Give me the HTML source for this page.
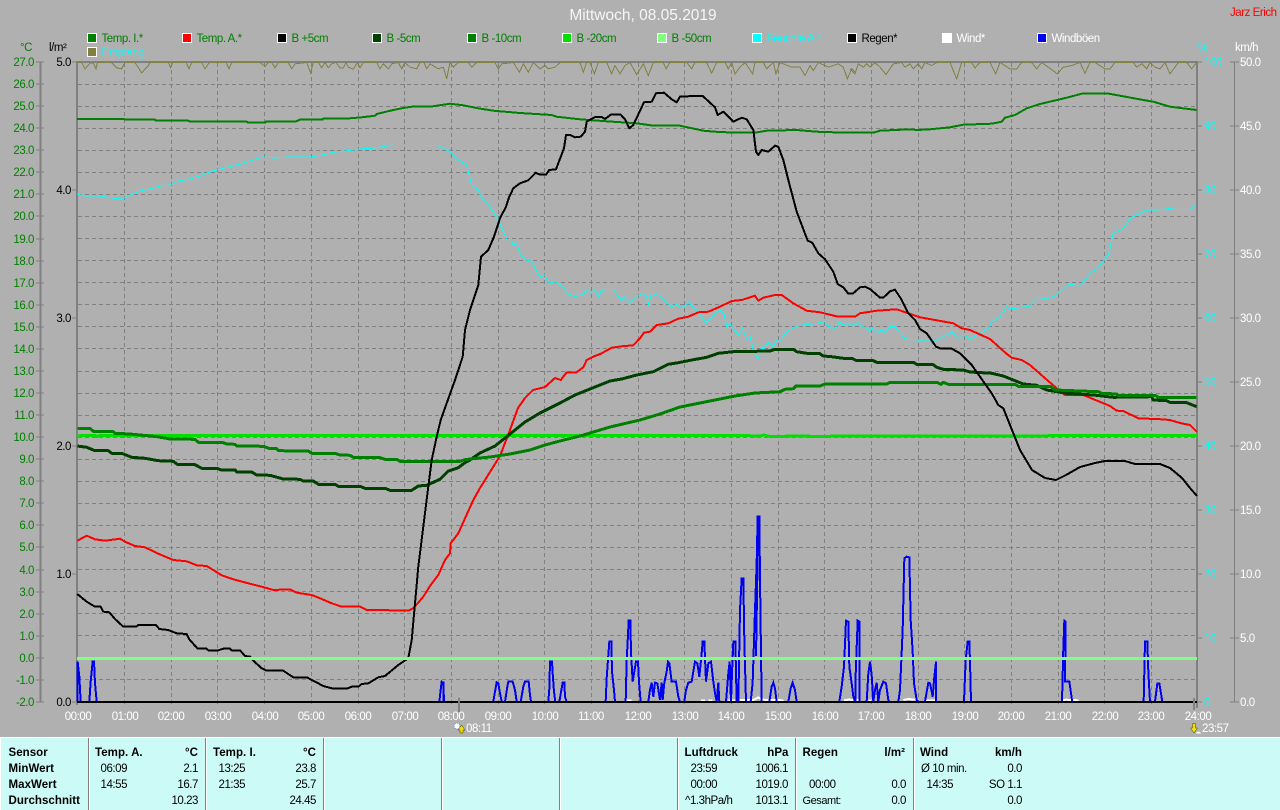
<!DOCTYPE html>
<html><head><meta charset="utf-8"><title>Mittwoch, 08.05.2019</title>
<style>
html,body{margin:0;padding:0;background:#b0b0b0;width:1280px;height:810px;overflow:hidden}
svg{display:block;font-family:"Liberation Sans",sans-serif;font-size:11.5px;letter-spacing:-.45px}
.l{fill:none;shape-rendering:crispEdges;stroke-linejoin:round}
.g{stroke:#808080;stroke-width:1;stroke-dasharray:4 3;shape-rendering:crispEdges;fill:none}
.s{stroke:#808080;stroke-width:1;shape-rendering:crispEdges;fill:none}
.b{font-weight:bold;font-size:11.5px;fill:#000;letter-spacing:.05px}
.t{fill:#000}
.e{text-anchor:end}
.m{text-anchor:middle;fill:#fff}
.blue polyline{fill:none;stroke:#0000f0;stroke-width:2;vector-effect:non-scaling-stroke;shape-rendering:crispEdges}
.cy polyline{fill:none;stroke:#00ffff;stroke-width:1;vector-effect:non-scaling-stroke;shape-rendering:crispEdges}
.ol polyline{fill:none;stroke:#808040;stroke-width:1;vector-effect:non-scaling-stroke;shape-rendering:crispEdges}
.wh polyline{fill:none;stroke:#fff;stroke-width:2;vector-effect:non-scaling-stroke;shape-rendering:crispEdges}
</style></head><body>
<svg width="1280" height="810" viewBox="0 0 1280 810" xmlns="http://www.w3.org/2000/svg">
<rect width="1280" height="810" fill="#b0b0b0"/>

<text x="643" y="20" text-anchor="middle" font-size="15.5" letter-spacing="0" fill="#f6f6f6">Mittwoch, 08.05.2019</text>
<text x="1230" y="16" fill="#ff0000">Jarz Erich</text>

<!-- legend -->
<g stroke="#fff" stroke-width="1" shape-rendering="crispEdges">
<rect x="87.5" y="33.5" width="9" height="9" fill="#008000"/>
<rect x="182.5" y="33.5" width="9" height="9" fill="#ff0000"/>
<rect x="277.5" y="33.5" width="9" height="9" fill="#000"/>
<rect x="372.5" y="33.5" width="9" height="9" fill="#004000"/>
<rect x="467.5" y="33.5" width="9" height="9" fill="#008000"/>
<rect x="562.5" y="33.5" width="9" height="9" fill="#00e000"/>
<rect x="657.5" y="33.5" width="9" height="9" fill="#80ff80"/>
<rect x="752.5" y="33.5" width="9" height="9" fill="#00ffff"/>
<rect x="847.5" y="33.5" width="9" height="9" fill="#000"/>
<rect x="942.5" y="33.5" width="9" height="9" fill="#fff"/>
<rect x="1037.5" y="33.5" width="9" height="9" fill="#0000f0"/>
<rect x="87.5" y="47.5" width="9" height="9" fill="#808040"/>
</g>
<g fill="#008000">
<text x="101.5" y="42">Temp. I.*</text>
<text x="196.5" y="42">Temp. A.*</text>
<text x="291.5" y="42">B +5cm</text>
<text x="386.5" y="42">B -5cm</text>
<text x="481.5" y="42">B -10cm</text>
<text x="576.5" y="42">B -20cm</text>
<text x="671.5" y="42">B -50cm</text>
</g>
<text x="766.5" y="42" fill="#00ffff">Feuchte A.*</text>
<text x="861.5" y="42" fill="#000">Regen*</text>
<text x="956.5" y="42" fill="#fff">Wind*</text>
<text x="1051.5" y="42" fill="#fff">Windböen</text>
<text x="101.5" y="56" fill="#00ffff">Empfang</text>

<text x="20" y="51" fill="#008000">°C</text>
<text x="49" y="51" fill="#000">l/m²</text>
<text x="1198" y="51" fill="#00ffff">%</text>
<text x="1235" y="51" fill="#fff">km/h</text>

<!-- left axes -->
<path class="s" d="M40.5 62V702" style="stroke-width:2"/>
<path class="s" d="M36 62H44M36 84H44M36 106H44M36 128H44M36 150H44M36 172H44M36 194H44M36 216H44M36 239H44M36 261H44M36 283H44M36 305H44M36 327H44M36 349H44M36 371H44M36 393H44M36 415H44M36 437H44M36 459H44M36 481H44M36 503H44M36 525H44M36 547H44M36 570H44M36 592H44M36 614H44M36 636H44M36 658H44M36 680H44M36 702H44"/>
<g fill="#008000" class="e" text-anchor="end">
<text x="34" y="66">27.0</text><text x="34" y="88">26.0</text><text x="34" y="110">25.0</text><text x="34" y="132">24.0</text><text x="34" y="154">23.0</text><text x="34" y="176">22.0</text><text x="34" y="198">21.0</text><text x="34" y="220">20.0</text><text x="34" y="243">19.0</text><text x="34" y="265">18.0</text><text x="34" y="287">17.0</text><text x="34" y="309">16.0</text><text x="34" y="331">15.0</text><text x="34" y="353">14.0</text><text x="34" y="375">13.0</text><text x="34" y="397">12.0</text><text x="34" y="419">11.0</text><text x="34" y="441">10.0</text><text x="34" y="463">9.0</text><text x="34" y="485">8.0</text><text x="34" y="507">7.0</text><text x="34" y="529">6.0</text><text x="34" y="551">5.0</text><text x="34" y="574">4.0</text><text x="34" y="596">3.0</text><text x="34" y="618">2.0</text><text x="34" y="640">1.0</text><text x="34" y="662">0.0</text><text x="34" y="684">-1.0</text><text x="34" y="706">-2.0</text>
</g>
<g fill="#000" text-anchor="end">
<text x="71" y="66">5.0</text><text x="71" y="194">4.0</text><text x="71" y="322">3.0</text><text x="71" y="450">2.0</text><text x="71" y="578">1.0</text><text x="71" y="706">0.0</text>
</g>
<path class="s" d="M72 62H77M72 190H77M72 318H77M72 446H77M72 574H77M72 702H77"/>

<!-- grid -->
<path class="g" d="M78 84.5H1196M78 106.5H1196M78 128.5H1196M78 150.5H1196M78 172.5H1196M78 194.5H1196M78 216.5H1196M78 238.5H1196M78 260.5H1196M78 282.5H1196M78 304.5H1196M78 326.5H1196M78 348.5H1196M78 371.5H1196M78 393.5H1196M78 415.5H1196M78 437.5H1196M78 459.5H1196M78 481.5H1196M78 503.5H1196M78 525.5H1196M78 547.5H1196M78 569.5H1196M78 591.5H1196M78 613.5H1196M78 635.5H1196M78 657.5H1196M78 679.5H1196"/>
<path class="g" d="M124.5 63V707M171.5 63V707M217.5 63V707M264.5 63V707M311.5 63V707M358.5 63V707M404.5 63V707M451.5 63V707M498.5 63V707M544.5 63V707M591.5 63V707M638.5 63V707M684.5 63V707M731.5 63V707M778.5 63V707M824.5 63V707M871.5 63V707M918.5 63V707M964.5 63V707M1011.5 63V707M1058.5 63V707M1104.5 63V707M1151.5 63V707"/>

<!-- frame -->
<path d="M77 62V705M1197 62V708M76 62H1198" fill="none" stroke="#808080" stroke-width="2" shape-rendering="crispEdges"/>
<path class="s" d="M1198 62H1202M1198 126H1202M1198 190H1202M1198 254H1202M1198 318H1202M1198 382H1202M1198 446H1202M1198 510H1202M1198 574H1202M1198 638H1202M1198 702H1202"/>

<!-- right axes -->
<g fill="#00ffff">
<text x="1204" y="66">100</text><text x="1204" y="130">90</text><text x="1204" y="194">80</text><text x="1204" y="258">70</text><text x="1204" y="322">60</text><text x="1204" y="386">50</text><text x="1204" y="450">40</text><text x="1204" y="514">30</text><text x="1204" y="578">20</text><text x="1204" y="642">10</text><text x="1204" y="706">0</text>
</g>
<path class="s" d="M1234.5 62V702M1230 62H1239M1230 126H1239M1230 190H1239M1230 254H1239M1230 318H1239M1230 382H1239M1230 446H1239M1230 510H1239M1230 574H1239M1230 638H1239M1230 702H1239"/>
<g fill="#fff">
<text x="1240" y="66">50.0</text><text x="1240" y="130">45.0</text><text x="1240" y="194">40.0</text><text x="1240" y="258">35.0</text><text x="1240" y="322">30.0</text><text x="1240" y="386">25.0</text><text x="1240" y="450">20.0</text><text x="1240" y="514">15.0</text><text x="1240" y="578">10.0</text><text x="1240" y="642">5.0</text><text x="1240" y="706">0.0</text>
</g>

<!-- olive -->
<g class="ol">
<polyline transform="translate(0,.5) scale(.33333)" points="232,186 245,186 255,205 270,188 280,188 288,205 292,186 335,186 350,202 365,205 375,186 405,186 425,217 445,195 450,186 505,186 512,202 518,186 558,186 567,205 575,186 605,186 615,205 628,186 678,186 687,205 695,186 780,186 795,198 805,186 815,186 825,202 835,186 865,186 875,205 885,190 920,186 932,217 940,186 955,186 965,202 975,186 985,202 995,190 1008,186 1020,202 1030,202 1038,186 1045,200 1060,206 1072,186 1080,202 1090,186 1130,186 1140,205 1150,190 1165,205 1175,190 1195,186 1205,205 1215,186 1230,200 1250,205 1260,186 1272,186 1280,205 1290,190"/>
<polyline transform="translate(430,.5) scale(.33333)" points="0,190 25,205 40,200 50,235 60,186 70,200 85,186 115,186 125,200 140,186 195,186 205,205 215,190 250,186 268,215 280,190 295,215 310,186 330,205 345,195 355,205 375,200 390,186 450,186 460,215 470,186 480,186 493,220 505,186 530,186 545,220 555,195 570,220 585,195 600,186 620,222 640,190 655,225 670,186 700,186 708,205 720,186 770,186 785,205 795,186 830,186 845,218 860,186 885,186 895,205 905,186 915,220 930,200 945,186 968,220 975,186 1000,186 1010,205 1030,186 1038,220 1050,186 1085,200 1110,200 1125,225 1140,195 1150,210 1165,186 1195,200 1225,190 1240,200 1252,235 1265,205 1275,215"/>
<polyline transform="translate(850,.5) scale(.33333)" points="0,205 15,220 25,190 40,200 50,190 60,200 75,186 90,200 108,222 130,190 155,186 165,200 180,190 190,205 205,190 215,205 225,186 245,195 260,186 300,186 320,235 335,186 365,186 375,202 390,186 420,186 437,220 450,186 480,205 500,205 515,186 545,186 560,205 575,186 595,200 622,220 640,200 665,195 690,186 705,218 720,186 735,186 765,205 780,205 795,186 850,186 860,200 875,190 890,205 900,186 915,200 930,205 945,186 960,220 985,186 1010,186 1025,205 1040,186"/>
</g>

<!-- Temp I -->
<polyline class="l" stroke="#008000" stroke-width="2" points="77,119 124,119 125,119.7 155,119.7 156,120.7 188.3,120.7 190,121.7 246.7,121.7 248,122.7 265,122.7 266,121.7 295,121.7 300,119.7 322.7,119.7 323,118.7 350,118.3 361.7,117.3 375,115.7 376.7,114 393.3,110 403.3,108 411.7,106.7 430,106.7 450,103.7 463.3,105.3 478.3,108.3 493.3,110.7 520,113 551.7,115 556.7,116.7 580,119.3 606.7,121.3 636.7,123.3 653.3,125.7 680,125.7 703.3,130.7 715,131.7 735,132.7 755,132.7 766.7,130.7 796.7,130 816.7,131.7 845,132.7 873.3,132.7 880,130.7 910,129.3 916.7,130 930,129.3 950,127.3 963.3,124.7 991.7,123.7 1001.7,121.7 1005,117.7 1015,115 1026.7,108.3 1040,104 1066.7,97.7 1083.3,93.3 1106.7,93.3 1120,95.7 1143.3,100 1153.3,101.7 1170,106.7 1196.7,110"/>

<!-- cyan -->
<g class="cy">
<polyline points="77,194 85,196 100,196 112,198 122,199 130,195 140,191 150,189 160,186 170,185 178,181 190,179 200,176 212,171 225,168 240,164 250,161 262,157 275,158 290,157 310,157 322,155 335,152 345,151 360,149 375,148 393,145"/>
<polyline transform="translate(420,80) scale(.33333)" points="0,197 55,197 90,215 115,240 140,255 155,315 175,330 185,355 210,380 235,420 260,478 272,478 280,495 290,490 300,520 320,540 335,545 360,590 375,585 385,610 405,605 430,620 440,640 465,650 490,642 498,630 510,636 525,632 535,650 545,630 580,628 605,662 612,650 628,668 665,640 680,648 685,675 695,640 722,648 755,682 770,672 780,682 795,680 805,668 830,690 860,730 875,710 900,690 912,700 920,740 930,732 955,765 968,745 978,775 990,770 1003,820 1015,835 1025,800 1030,810 1045,785 1060,800 1070,780"/>
<polyline transform="translate(780,100) scale(.33333)" points="0,722 20,695 50,678 80,674 110,670 135,665 145,680 165,685 178,666 190,675 225,675 238,668 250,680 270,693 278,685 295,697 305,688 315,698 330,680 345,680 375,717 415,720 470,720 515,697 538,715 550,705 570,717 600,700 625,685 635,665 660,650 680,620 690,627 750,618 775,592 800,597 830,585 865,552 900,558 935,515 950,508 985,465 1000,400 1030,385 1050,355 1100,330 1135,330 1170,325 1185,328 1230,328 1248,315"/>
</g>

<!-- red -->
<polyline class="l" stroke="#ff0000" stroke-width="2" points="77.3,540.7 86.7,535.7 95,539.3 105,540.7 120,538.7 125,541.7 135,546 145,547.3 157.3,553.3 173.3,560 186.7,561.3 196.7,565.3 206.7,566 221.7,575.3 233.3,579.3 248.3,583.3 261.7,586.7 273.3,590 290,589.3 296.7,592.7 311.7,595 320,598.3 331.7,603.3 341.7,606.7 360,606.7 366.7,610 378.3,610 408.3,610.7 413.3,608.3 423.3,596.7 430,586 438.3,575 445,560 450,553.3 450.7,543.3 458.3,533.3 473.3,500 480,488 490,472 500,456 510,430 518,408 525,398 533,390 545,387 555,378 560.7,380 566.7,372.3 576.7,372.3 583.3,367.3 586.7,360 595,356 601.7,353.3 611.7,347.7 621.7,346.3 633.3,345.3 640,338.3 644,332.7 650,331.7 656.7,325 668.3,323.3 678.3,318.7 688.3,316.7 698.3,312.3 708.3,311.7 720,306.7 731.7,301 741.7,300 755,295.7 758.3,300.7 763.3,297.7 775,295 781.7,295 793.3,303.3 806.7,310.7 820,312.3 838.3,316.7 855,316.7 860,313.3 876.7,310.7 896.7,309.3 920,317.3 935,320 953.3,323.3 961.7,328.3 970,330 990,339 1006,353.3 1011.7,357.7 1021.7,360 1030,365 1043.3,376.7 1056.7,388.3 1065,395 1083.3,395 1110,406 1116.7,410.7 1123.3,411 1138.3,418.3 1161.7,419.3 1170,420 1180,423 1190,425 1197,432"/>

<!-- wind -->
<g class="wh">
<polyline transform="translate(430,500) scale(.33333)" points="590,601 605,601"/>
<polyline transform="translate(430,500) scale(.33333)" points="813,601 825,601"/>
<polyline transform="translate(430,500) scale(.33333)" points="835,601 848,601"/>
<polyline transform="translate(430,500) scale(.33333)" points="895,601 920,601"/>
<polyline transform="translate(430,500) scale(.33333)" points="928,600 970,600 985,592 995,599 1060,601"/>
<polyline transform="translate(820,500) scale(.33333)" points="72,601 85,599 120,601"/>
<polyline transform="translate(820,500) scale(.33333)" points="145,601 155,601"/>
<polyline transform="translate(820,500) scale(.33333)" points="250,600 265,597 295,600"/>
<polyline transform="translate(820,500) scale(.33333)" points="315,601 350,601"/>
<polyline transform="translate(820,500) scale(.33333)" points="728,601 738,599 775,601"/>
</g>

<!-- gusts -->
<g class="blue">
<polyline transform="translate(70,420) scale(.33333)" points="22,845 23,725 28,770 32,845"/>
<polyline transform="translate(70,420) scale(.33333)" points="58,845 62,785 68,725 72,725 75,790 80,845"/>
<polyline transform="translate(70,420) scale(.33333)" points="1108,845 1115,785 1120,790 1120,845"/>
<g transform="translate(430,500) scale(.33333)">
<polyline points="28,605 32,570 35,547 40,547 42,605"/>
<polyline points="190,605 195,575 200,547 205,550 210,580 215,605"/>
<polyline points="225,605 232,560 235,545 248,545 255,570 260,605"/>
<polyline points="272,605 280,560 285,545 296,545 300,585 303,605"/>
<polyline points="355,605 358,565 360,485 366,485 368,520 372,575 376,605"/>
<polyline points="388,605 395,565 398,548 403,548 405,590 410,605"/>
<polyline points="527,605 530,535 535,465 538,425 544,425 546,515 552,570 555,605"/>
<polyline points="587,605 590,480 593,425 596,362 601,362 603,455 608,545 612,520 618,485 624,485 627,545 632,605"/>
<polyline points="655,605 660,570 665,548 670,590 675,548 682,550 690,600 695,548 698,600 703,548 710,515 714,485 718,490 725,545 738,545 745,590 750,605"/>
<polyline points="763,605 768,570 775,548 785,545 795,485 802,490 808,530 815,460 818,425 823,425 828,545 835,490 843,485 850,545 855,580 860,605 865,548 868,605"/>
<polyline points="888,605 895,520 899,485 903,605 906,520 910,425 916,425 920,605"/>
<polyline points="925,605 930,330 935,235 940,235 943,420 948,605"/>
<polyline points="962,605 968,548 975,330 980,190 983,50 988,50 990,235 995,605"/>
<polyline points="978,468 985,50"/>
<polyline points="1018,605 1025,560 1030,548 1035,565 1040,605"/>
<polyline points="1075,605 1082,565 1088,548 1095,570 1100,605"/>
</g>
<g transform="translate(820,500) scale(.33333)">
<polyline points="58,605 65,560 72,500 78,362 85,365 88,500 95,550 100,590 105,605"/>
<polyline points="107,605 107,525 113,362 118,365 118,605"/>
<polyline points="140,605 145,520 150,485 155,525 160,605 165,570 170,548 175,605 180,570 190,545 198,550 205,600 208,605"/>
<polyline points="235,605 240,570 248,390 253,175 260,170 268,172 272,360 278,455 282,550 290,600 295,605"/>
<polyline points="315,605 325,548 330,550 338,590 343,530 348,485 348,605"/>
<polyline points="432,605 437,480 443,425 448,425 450,485 453,605"/>
<polyline points="726,605 730,445 733,362 737,365 735,545 748,545 756,600 756,605"/>
<polyline points="971,605 975,425 982,425 985,515 990,605"/>
<polyline points="1005,605 1012,550 1018,550 1027,605"/>
</g>
</g>

<!-- B -20 -->
<polyline class="l" stroke="#00e000" stroke-width="3" points="77,437 80,435.5 95,435.5 97,436.5 100,435.5 740,435.5 760,436 764,435 770,436.5 800,436 820,436.5 840,436 900,436 1197,435.5"/>

<!-- B -5 -->
<polyline class="l" stroke="#004000" stroke-width="3" points="77.3,446 86.7,447.3 95,450.7 108.3,450.7 111.7,453.3 121.7,453.3 131.7,457.3 145,458.3 158.3,460.7 173.3,461.3 177.3,464.3 195,464.7 201.7,468.3 216.7,468.3 221.7,470 235,470 236.7,472 251.7,472 256.7,475 270,475.3 283.3,479 300,479.3 303.3,481 313.3,481 318.3,484.3 335,484.3 338.3,486.3 360,486.3 365,488.3 385,488.3 390,490.3 411.7,490.3 418.3,486 426.7,485.3 440,479.3 448.3,471 458.3,467.7 465,462.7 470,460 480,453 495,446 510,434 525,422 540,413 560,403 575,395 590,389 610,381 621.7,379 636.7,375 653.3,371.7 668.3,364.3 678.3,362.7 691.7,360 706.7,357.3 718.3,353.3 733.3,351.7 770,351 775,349.3 793.3,349.3 796.7,351.7 806.7,353.3 819.3,353.3 823.3,356 831.7,356.7 843.3,358.3 851.7,358.3 856.7,360.7 873.3,360.7 876.7,362.3 913.3,362.3 917.3,364.7 933.3,364.7 936.7,367.3 943.3,369.3 963.3,370 970,372 991.7,373.3 1003.3,376 1013.3,380 1023.3,384 1036.7,385.3 1046.7,390 1066.7,393.3 1093.3,395 1113.3,397.3 1151.7,396.7 1153.3,400 1166.7,400.7 1170,402.3 1186.7,402.7 1196.7,406.7"/>

<!-- B -10 -->
<polyline class="l" stroke="#008000" stroke-width="3" points="77.3,428.3 90,428.3 93.3,431.3 113.3,431.7 115,433.3 130,434 157.3,436.7 170,439 195,439.3 198.3,442.3 223.3,442.7 226.7,444 235,444.3 236.7,446 263.3,446.3 270,448.7 276.7,448.7 278.3,450.7 308.3,451 311.7,453.3 335,453.3 340,455 350,455.3 353.3,457.3 380,457.7 385,459.3 396.7,459.3 400,461.3 460,461.3 465,459.7 470,459 490,457 510,454 530,450 545,445 560,441 580,436 590,433 610,427 640,420 660,414 680,407 700,403 735,396 755,393 780,391.7 785,389.3 793.3,388.7 796,386 820,386 825,384 886.7,384 890,382.3 936.7,382.3 941,384.3 943.3,382.3 948.3,384.3 1015,384.3 1018.3,386.3 1050,386.3 1055,390 1098.3,391.7 1101.7,393.3 1116.7,394 1118.3,395.3 1155,395.3 1158.3,397.3 1196.7,397.3"/>

<!-- black B +5 -->
<polyline class="l" stroke="#000" stroke-width="2" points="77.3,594 86.7,601.7 95,606.7 100.7,606.7 103.3,611.7 109.3,612.3 115,619 123.3,626.7 136,626.7 138.3,625 156,625 159.3,629 168.3,630 176.7,633.3 186.7,634 189.3,639.3 197.3,648.3 206,648.3 208.3,650.3 218.3,650.3 223.3,648.7 230,648.7 231.7,650.3 240,650.3 245,656 250,656.7 253.3,660.7 261.7,668.3 266.7,670.7 283.3,670.7 293.3,677.3 306.7,677.3 323.3,686 333.3,688.7 346.7,688.7 351.7,686.7 358.3,686.7 361.7,684 368.3,683.3 378.3,677.3 385,676 398.3,665 408.3,658.3 411.7,640 418.3,566.7 428.3,486.7 431.7,460 436.7,436.7 440.7,420 455,380 462.7,356.7 465,330 470,310 478.3,285 481,256.7 488.3,250 494,236.7 500,218.3 506,206.7 509.3,196.7 513.3,188.3 520,183.3 528.3,180.3 535.7,172.7 540,174.7 546,174.7 549.3,170 556,169.3 564,148.3 566,135 570,135 575,137.3 580.7,136.7 585,131.7 586.7,121.7 595,117 601.7,117 605,119 610.7,114.7 620.7,114.7 625,119.3 629.3,128.3 633.3,125 644,102.3 651.7,101.7 656,93.3 664,92.7 671.7,99.3 676.7,102.3 680,96.7 693,96 702.7,96 715,107.3 717.7,115 723.3,111.7 733.3,121.7 741.7,117.7 746.7,119.3 753.3,130 756,151.7 758.3,155 761.7,150 768.3,151.7 775,145.7 778.3,146.7 783.3,160 788.3,180 796.7,211.7 807.7,240.7 812.3,242.7 818.3,253.3 825,259.3 833.3,271.7 837.7,284 843.3,287.3 848.3,293.7 852.7,293.7 860,287.3 865,286.7 870,289 880,297.7 883.3,297.7 890,291.3 895,289.7 900.7,298.3 908.3,313.3 915,320 920,329 926.7,333.3 936,346.7 940,348.3 951.7,348.7 960,353.3 971.7,365 980,376.7 991.7,393.3 998.3,405 1003.3,408.3 1006.7,416.7 1012,430 1020,450 1032,470 1045,478 1056,480 1066,475 1080,467 1095,463 1105,461 1125,461 1135,464 1160,464 1170,468 1182,478 1190,488 1197,496"/>

<!-- baseline + B -50 -->
<path d="M77 702H1197" stroke="#000" stroke-width="2" shape-rendering="crispEdges"/>
<path d="M77 658.5H1197" stroke="#80ff80" stroke-width="3" shape-rendering="crispEdges"/>
<path d="M459 698V712M1194 698V710" stroke="#808080" stroke-width="2" shape-rendering="crispEdges"/>

<!-- time labels -->
<g class="m">
<text x="78" y="720">00:00</text><text x="125" y="720">01:00</text><text x="171" y="720">02:00</text><text x="218" y="720">03:00</text><text x="265" y="720">04:00</text><text x="311" y="720">05:00</text><text x="358" y="720">06:00</text><text x="405" y="720">07:00</text><text x="451" y="720">08:00</text><text x="498" y="720">09:00</text><text x="545" y="720">10:00</text><text x="591" y="720">11:00</text><text x="638" y="720">12:00</text><text x="685" y="720">13:00</text><text x="731" y="720">14:00</text><text x="778" y="720">15:00</text><text x="825" y="720">16:00</text><text x="871" y="720">17:00</text><text x="918" y="720">18:00</text><text x="965" y="720">19:00</text><text x="1011" y="720">20:00</text><text x="1058" y="720">21:00</text><text x="1105" y="720">22:00</text><text x="1151" y="720">23:00</text><text x="1198" y="720">24:00</text>
</g>
<text x="466" y="732" fill="#fff">08:11</text>
<text x="1202" y="732" fill="#fff">23:57</text>
<!-- sun icons -->
<circle cx="457" cy="726" r="3" fill="#fff" stroke="#4040c0" stroke-width=".6" stroke-dasharray="1 1"/>
<path d="M461.5 725L465 730H463V733H460V730H458Z" fill="#f0e000" stroke="#404000" stroke-width=".5"/>
<path d="M1194 733L1190.5 728H1192.5V723.5H1195.5V728H1197.5Z" fill="#f0e000" stroke="#404000" stroke-width=".5"/>
<path d="M1196 733.5A2.6 2.6 0 0 1 1201 733.5Z" fill="#fff"/>

<!-- panel -->
<rect x="0" y="737" width="1280" height="73" fill="#fff"/>
<rect x="1" y="738" width="1279" height="72" fill="#ccfbf7"/>
<path d="M88.5 738V810M205.5 738V810M323.5 738V810M441.5 738V810M559.5 738V810M677.5 738V810M795.5 738V810M913.5 738V810" stroke="#808080" stroke-width="1" shape-rendering="crispEdges"/>
<path d="M89.5 738V810M206.5 738V810M324.5 738V810M442.5 738V810M560.5 738V810M678.5 738V810M796.5 738V810M914.5 738V810" stroke="#fff" stroke-width="1" shape-rendering="crispEdges"/>

<g class="b">
<text x="8.5" y="756">Sensor</text><text x="8.5" y="772">MinWert</text><text x="8.5" y="788">MaxWert</text><text x="8.5" y="804">Durchschnitt</text>
<text x="95" y="756">Temp. A.</text><text x="198" y="756" text-anchor="end">°C</text>
<text x="213" y="756">Temp. I.</text><text x="316" y="756" text-anchor="end">°C</text>
<text x="684.5" y="756">Luftdruck</text><text x="788.5" y="756" text-anchor="end">hPa</text>
<text x="802.5" y="756">Regen</text><text x="905" y="756" text-anchor="end">l/m²</text>
<text x="920" y="756">Wind</text><text x="1022" y="756" text-anchor="end">km/h</text>
</g>
<g class="t">
<text x="100.5" y="772">06:09</text><text x="100.5" y="788">14:55</text>
<text x="218.5" y="772">13:25</text><text x="218.5" y="788">21:35</text>
<text x="690.5" y="772">23:59</text><text x="690.5" y="788">00:00</text><text x="685" y="804">^1.3hPa/h</text>
<text x="809" y="788">00:00</text><text x="802.5" y="804" font-size="11">Gesamt:</text>
<text x="921" y="772">Ø 10 min.</text><text x="926.5" y="788">14:35</text>
</g>
<g class="t" text-anchor="end">
<text x="198" y="772">2.1</text><text x="198" y="788">16.7</text><text x="198" y="804">10.23</text>
<text x="316" y="772">23.8</text><text x="316" y="788">25.7</text><text x="316" y="804">24.45</text>
<text x="788" y="772">1006.1</text><text x="788" y="788">1019.0</text><text x="788" y="804">1013.1</text>
<text x="906" y="788">0.0</text><text x="906" y="804">0.0</text>
<text x="1022" y="772">0.0</text><text x="1022" y="788">SO 1.1</text><text x="1022" y="804">0.0</text>
</g>
</svg>
</body></html>
